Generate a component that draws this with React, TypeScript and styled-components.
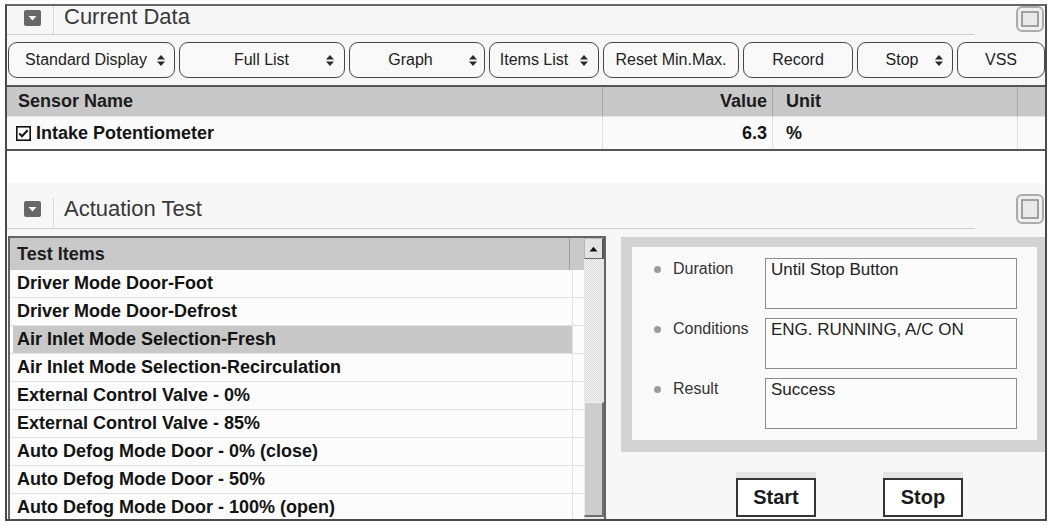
import React from "react";
import styled, { createGlobalStyle } from "styled-components";

const GlobalStyle = createGlobalStyle`
  html, body { margin: 0; padding: 0; background: #fff; }
  body { font-family: "Liberation Sans", Arial, sans-serif; }
  * { box-sizing: border-box; }
`;

const Frame = styled.div`
  margin: 4px 0 0 5px;
  width: 1042px;
  height: 517px;
  border: 2px solid #4a4a4a;
  border-top-color: #666;
  background: #f7f7f7;
  display: flex;
  flex-direction: column;
  overflow: hidden;
`;

const SectionHeader = styled.div<{ $h: number }>`
  display: flex;
  align-items: flex-start;
  height: ${(p) => p.$h}px;
  flex-shrink: 0;
`;

const TitleBar = styled.div`
  width: 968px;
  height: 100%;
  border-bottom: 1px solid #cdcdcd;
  display: flex;
  align-items: flex-end;
`;

const TitleInner = styled.div<{ $h: number }>`
  display: flex;
  align-items: flex-start;
  height: ${(p) => p.$h}px;
`;

const IconCell = styled.div<{ $top: number }>`
  width: 47px;
  height: 100%;
  padding: ${(p) => p.$top}px 0 0 17px;
  border-right: 1px solid #d9d9d9;
  svg { display: block; }
`;

const Title = styled.div<{ $top: number; $lh: number }>`
  margin-top: ${(p) => p.$top}px;
  padding-left: 10px;
  font-size: 22px;
  line-height: ${(p) => p.$lh}px;
  color: #383838;
  white-space: nowrap;
`;

const CornerSlot = styled.div<{ $top: number }>`
  margin: ${(p) => p.$top}px 0 0 41px;
  width: 28px;
  svg { display: block; }
`;

const Toolbar = styled.div`
  display: flex;
  gap: 4px;
  padding-left: 1px;
  margin-top: 7px;
  height: 36px;
  flex-shrink: 0;
`;

const ToolButton = styled.div<{ $w: number; $pl: number; $pr: number; $arrow: boolean }>`
  width: ${(p) => p.$w}px;
  height: 36px;
  flex-shrink: 0;
  border: 1.5px solid #474747;
  border-radius: 9px;
  background: #f9f9f9;
  display: grid;
  grid-template-columns: ${(p) => (p.$arrow ? "1fr auto" : "1fr")};
  column-gap: 4px;
  align-items: center;
  justify-items: center;
  padding: 0 ${(p) => p.$pr}px 0 ${(p) => p.$pl}px;
  font-size: 16px;
  color: #222;
  white-space: nowrap;
  svg { display: block; }
`;

const DataTable = styled.div`
  margin-top: 7px;
  display: grid;
  grid-template-columns: 596px 170px 245px 1fr;
  flex-shrink: 0;
  border-top: 2px solid #555;
  border-bottom: 2px solid #555;
  box-shadow: 0 1px 0 #aaa;
`;

const HeadCell = styled.div<{ $right?: boolean; $last?: boolean; $pad: string }>`
  height: 30px;
  background: #c8c8c8;
  border-right: ${(p) => (p.$last ? "none" : "1px solid #a8a8a8")};
  border-bottom: 1px solid #e4e4e4;
  font-weight: bold;
  font-size: 18px;
  color: #1c1c1c;
  display: flex;
  align-items: center;
  justify-content: ${(p) => (p.$right ? "flex-end" : "flex-start")};
  padding: ${(p) => p.$pad};
  white-space: nowrap;
`;

const BodyCell = styled.div<{ $right?: boolean; $last?: boolean; $pad: string }>`
  height: 32px;
  background: #fafafa;
  border-right: ${(p) => (p.$last ? "none" : "1px solid #e0e0e0")};
  font-weight: bold;
  font-size: 18px;
  color: #151515;
  display: flex;
  align-items: center;
  gap: 5px;
  justify-content: ${(p) => (p.$right ? "flex-end" : "flex-start")};
  padding: ${(p) => p.$pad};
  white-space: nowrap;
  svg { display: block; }
`;

const WhiteGap = styled.div`
  height: 32px;
  background: #fff;
  flex-shrink: 0;
`;

const ActBody = styled.div`
  margin-top: 7px;
  display: grid;
  grid-template-columns: 598px 424px;
  column-gap: 15px;
  padding-left: 1px;
  align-items: start;
`;

const ListBox = styled.div`
  height: 290px;
  border: 2px solid #646464;
  border-bottom: none;
  display: flex;
  background: #fcfcfc;
`;

const ListMain = styled.div`
  flex: 1;
  display: flex;
  flex-direction: column;
`;

const ListHeader = styled.div`
  height: 32px;
  flex-shrink: 0;
  display: grid;
  grid-template-columns: 560px 1fr;
  background: #c9c9c9;
`;

const ListHeadCell = styled.div`
  border-right: 1px solid #9d9d9d;
  display: flex;
  align-items: center;
  padding-left: 7px;
  font-weight: bold;
  font-size: 18px;
  color: #1c1c1c;
`;

const ListRow = styled.div`
  height: 28px;
  flex-shrink: 0;
  display: grid;
  grid-template-columns: 563px 1fr;
  border-bottom: 1px solid #e2e2e2;
`;

const ListCell = styled.div<{ $sel: boolean }>`
  border-right: 1px solid #e2e2e2;
  margin-left: ${(p) => (p.$sel ? 3 : 0)}px;
  padding-left: ${(p) => (p.$sel ? 4 : 7)}px;
  background: ${(p) => (p.$sel ? "#c8c8c8" : "transparent")};
  display: flex;
  align-items: center;
  font-weight: bold;
  font-size: 18px;
  color: #131313;
  white-space: nowrap;
`;

const ScrollBar = styled.div`
  width: 20px;
  display: flex;
  flex-direction: column;
`;

const ScrollUp = styled.div`
  height: 21px;
  flex-shrink: 0;
  background: #e3e3e3;
  border: 1px solid #b8b8b8;
  border-right: 2px solid #555;
  border-bottom: 1px solid #666;
  display: flex;
  align-items: center;
  justify-content: center;
  svg { display: block; }
`;

const ScrollTrack = styled.div`
  flex: 1;
  display: flex;
  flex-direction: column;
  background: repeating-conic-gradient(#d9d9d9 0 25%, #f5f5f5 0 50%) 0 0 / 2px 2px;
`;

const ScrollThumb = styled.div`
  margin-top: 143px;
  height: 115px;
  background: #cdcdcd;
  border-top: 1px solid #eee;
  border-left: 1px solid #eee;
  border-right: 2px solid #6e6e6e;
  border-bottom: 2px solid #6e6e6e;
`;

const RightCol = styled.div`
  display: flex;
  flex-direction: column;
  padding-top: 1px;
`;

const InfoPanel = styled.div`
  height: 215px;
  border-style: solid;
  border-color: #d3d3d3;
  border-width: 10px 8px 12px 11px;
  background: #fafafa;
  padding: 11px 20px 0 22px;
  display: flex;
  flex-direction: column;
  gap: 9px;
`;

const FieldRow = styled.div`
  display: grid;
  grid-template-columns: 111px 252px;
  height: 51px;
`;

const FieldLabel = styled.div`
  margin-top: 1px;
  height: 20px;
  display: flex;
  align-items: center;
  gap: 12px;
  font-size: 16px;
  color: #333;
  white-space: nowrap;
`;

const Bullet = styled.span`
  width: 7px;
  height: 7px;
  border-radius: 50%;
  background: #9c9c9c;
  flex-shrink: 0;
`;

const ValueBox = styled.div`
  border: 1px solid #8c8c8c;
  background: #fcfcfc;
  padding: 1px 5px;
  font-size: 17px;
  line-height: 20px;
  color: #222;
  white-space: nowrap;
`;

const ButtonRow = styled.div`
  margin-top: 26px;
  padding-left: 115px;
  display: flex;
  gap: 67px;
`;

const ActionButton = styled.div`
  width: 80px;
  height: 39px;
  border: 2px solid #333;
  background: #fff;
  box-shadow: 0 -6px 0 #e4e4e4;
  display: flex;
  align-items: center;
  justify-content: center;
  font-weight: bold;
  font-size: 20px;
  color: #1a1a1a;
`;

const CollapseIcon = () => (
  <svg width="17" height="16" viewBox="0 0 17 16">
    <rect x="0" y="0" width="17" height="16" rx="2" fill="#676767" />
    <path d="M4.5 6 L12.5 6 L8.5 10.5 Z" fill="#fff" />
  </svg>
);

const CornerIcon = ({ h }: { h: number }) => (
  <svg width="28" height={h} viewBox={`0 0 28 ${h}`}>
    <rect x="1" y="1" width="26" height={h - 2} rx="5" fill="#efefef" stroke="#acacac" strokeWidth="2" />
    <rect x="6" y="6" width="16" height={h - 12} fill="#e9e9e9" stroke="#8e8e8e" strokeWidth="1.6" />
  </svg>
);

const UpDown = () => (
  <svg width="10" height="13" viewBox="0 0 10 13">
    <polygon points="1,5.5 5,1 9,5.5" fill="#2a2a2a" />
    <polygon points="1,7.5 5,12 9,7.5" fill="#2a2a2a" />
  </svg>
);

const CheckBox = () => (
  <svg width="15" height="15" viewBox="0 0 15 15">
    <rect x="0.8" y="0.8" width="13.4" height="13.4" fill="#fff" stroke="#111" strokeWidth="1.6" />
    <path d="M3.2 7.4 L6 10.3 L11.6 4.2" fill="none" stroke="#111" strokeWidth="2" />
  </svg>
);

const UpTri = () => (
  <svg width="9" height="6" viewBox="0 0 9 6">
    <polygon points="0.5,5.5 4.5,0.8 8.5,5.5" fill="#111" />
  </svg>
);

type Tool = { label: string; w: number; arrow?: boolean; pl?: number; pr?: number };

const tools: Tool[] = [
  { label: "Standard Display", w: 167, arrow: true, pl: 11, pr: 8 },
  { label: "Full List", w: 166, arrow: true, pl: 22, pr: 9 },
  { label: "Graph", w: 136, arrow: true, pl: 7, pr: 6 },
  { label: "Items List", w: 110, arrow: true, pl: 3, pr: 9 },
  { label: "Reset Min.Max.", w: 136 },
  { label: "Record", w: 110 },
  { label: "Stop", w: 96, arrow: true, pl: 16, pr: 8 },
  { label: "VSS", w: 88 },
];

const testItems = [
  "Driver Mode Door-Foot",
  "Driver Mode Door-Defrost",
  "Air Inlet Mode Selection-Fresh",
  "Air Inlet Mode Selection-Recirculation",
  "External Control Valve - 0%",
  "External Control Valve - 85%",
  "Auto Defog Mode Door - 0% (close)",
  "Auto Defog Mode Door - 50%",
  "Auto Defog Mode Door - 100% (open)",
];

const fields = [
  { label: "Duration", value: "Until Stop Button" },
  { label: "Conditions", value: "ENG. RUNNING, A/C ON" },
  { label: "Result", value: "Success" },
];

export default function App() {
  return (
    <>
      <GlobalStyle />
      <Frame>
        <SectionHeader $h={29}>
          <TitleBar>
            <TitleInner $h={28}>
              <IconCell $top={4}>
                <CollapseIcon />
              </IconCell>
              <Title $top={0} $lh={21}>Current Data</Title>
            </TitleInner>
          </TitleBar>
          <CornerSlot $top={0}>
            <CornerIcon h={26} />
          </CornerSlot>
        </SectionHeader>

        <Toolbar>
          {tools.map((t) => (
            <ToolButton key={t.label} $w={t.w} $arrow={!!t.arrow} $pl={t.pl ?? 4} $pr={t.pr ?? 4}>
              <span>{t.label}</span>
              {t.arrow && <UpDown />}
            </ToolButton>
          ))}
        </Toolbar>

        <DataTable>
          <HeadCell $pad="0 0 0 11px">Sensor Name</HeadCell>
          <HeadCell $right $pad="0 5px 0 0">Value</HeadCell>
          <HeadCell $pad="0 0 0 13px">Unit</HeadCell>
          <HeadCell $last $pad="0" />
          <BodyCell $pad="0 0 0 9px">
            <CheckBox />
            Intake Potentiometer
          </BodyCell>
          <BodyCell $right $pad="0 5px 0 0">6.3</BodyCell>
          <BodyCell $pad="0 0 0 13px">%</BodyCell>
          <BodyCell $last $pad="0" />
        </DataTable>

        <WhiteGap />

        <SectionHeader $h={46}>
          <TitleBar>
            <TitleInner $h={30}>
              <IconCell $top={3}>
                <CollapseIcon />
              </IconCell>
              <Title $top={0} $lh={22}>Actuation Test</Title>
            </TitleInner>
          </TitleBar>
          <CornerSlot $top={11}>
            <CornerIcon h={30} />
          </CornerSlot>
        </SectionHeader>

        <ActBody>
          <ListBox>
            <ListMain>
              <ListHeader>
                <ListHeadCell>Test Items</ListHeadCell>
                <div />
              </ListHeader>
              {testItems.map((item, i) => (
                <ListRow key={item}>
                  <ListCell $sel={i === 2}>{item}</ListCell>
                  <div />
                </ListRow>
              ))}
            </ListMain>
            <ScrollBar>
              <ScrollUp>
                <UpTri />
              </ScrollUp>
              <ScrollTrack>
                <ScrollThumb />
              </ScrollTrack>
            </ScrollBar>
          </ListBox>

          <RightCol>
            <InfoPanel>
              {fields.map((f) => (
                <FieldRow key={f.label}>
                  <FieldLabel>
                    <Bullet />
                    {f.label}
                  </FieldLabel>
                  <ValueBox>{f.value}</ValueBox>
                </FieldRow>
              ))}
            </InfoPanel>
            <ButtonRow>
              <ActionButton>Start</ActionButton>
              <ActionButton>Stop</ActionButton>
            </ButtonRow>
          </RightCol>
        </ActBody>
      </Frame>
    </>
  );
}
